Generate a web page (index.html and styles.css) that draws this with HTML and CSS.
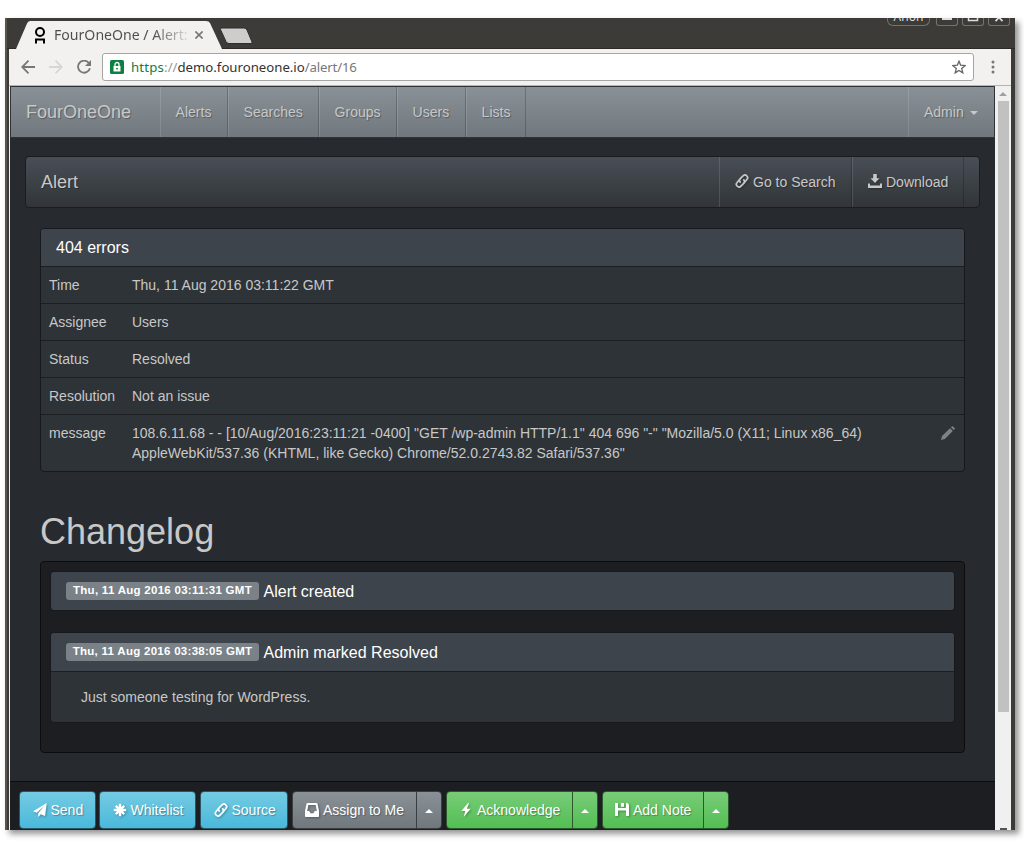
FILE: index.html
```html
<!DOCTYPE html>
<html lang="en">
<head>
<meta charset="utf-8">
<title>FourOneOne / Alert</title>
<link rel="stylesheet" href="styles.css">
</head>
<body>
<svg class="defs" aria-hidden="true">
  <symbol id="link" viewBox="0 0 14 14"><g fill="none" stroke="currentColor" stroke-width="1.7" stroke-linecap="round"><path d="M5.200 8.100A2.600 2.600 0 0 1 5.300 4.600L8 1.900a2.600 2.600 0 0 1 3.900 3.600L9.600 8.300"/><path d="M8.800 5.900a2.600 2.600 0 0 1-.1 3.500L6 12.100a2.600 2.600 0 0 1-3.900-3.600L4.400 5.700"/></g></symbol>
  <symbol id="download" viewBox="0 0 14 14"><path fill="currentColor" d="M5.200 0h3.600v4.300h2.700L7 9 2.500 4.300h2.700zM0 9.500h2v2h10v-2h2V14H0z"/></symbol>
  <symbol id="send" viewBox="0 0 14 14"><path fill="currentColor" d="M13.800.1 12 12.900l-4.200-1.700L5.200 14v-3.800L11.500 2.800 3.800 9.700.1 8.200z"/></symbol>
  <symbol id="asterisk" viewBox="0 0 14 14"><g stroke="currentColor" stroke-width="2.500"><path d="M7 .8v12.400M.8 7h12.400M2.800 2.800l8.400 8.400M11.200 2.800l-8.400 8.400"/></g></symbol>
  <symbol id="inbox" viewBox="0 0 14 14"><path fill="currentColor" fill-rule="evenodd" d="M2.500 0h9q.8 0 1 .8L14 8v5.200q0 .8-.8.8H.8Q0 14 0 13.200V8L1.500.8q.2-.8 1-.8zM3.300 2 2.200 8h2l1.300 2.200h3L9.800 8h2L10.700 2z"/></symbol>
  <symbol id="bolt" viewBox="0 0 14 14"><path fill="currentColor" d="M9 0 2.400 7.900h3.800L4.700 14l7-8.300H7.900L10 0z"/></symbol>
  <symbol id="floppy" viewBox="0 0 14 14"><path fill="currentColor" fill-rule="evenodd" d="M0 0h3v5h8V0h1.300L14 1.700V13H0zM6 0h3v3.700H6zM3 7.500V13h8V7.500z"/></symbol>
  <symbol id="pencil" viewBox="0 0 14 14"><path fill="currentColor" d="M0 14l1-3.900L9 2.200l2.800 2.800-7.900 8zM9.900 1.300l.9-.9q.5-.5 1.100 0l1.700 1.700q.5.600 0 1.100l-.9.9z"/></symbol>
</svg>

<div class="window">
  <div class="titlebar">
    <div class="tab">
      <svg class="tab-shape" viewBox="0 0 206 28"><path d="M0 28 11 2.500Q12 0 14 0H190Q193 0 194 2L206 28z" fill="#f2f1f0"/></svg>
      <div class="tab-content">
        <svg class="favicon" viewBox="0 0 12 17" fill="none" stroke="#000" stroke-width="2"><circle cx="6" cy="5" r="4"/><path d="M2 16.500v-4h8v4M1 15.500h2M9 15.500h2"/></svg>
        <span class="tab-title">FourOneOne / Alert:</span>
        <svg class="tab-close" viewBox="0 0 8 8" stroke="#777" stroke-width="1.600"><path d="M.4.4l7.200 7.200M7.600.4.400 7.600"/></svg>
      </div>
    </div>
    <svg class="new-tab" viewBox="0 0 34 18"><path d="M3 1h22q2 0 3 2l5 12q.5 1.500-1 1.500H10q-2 0-3-2L1.500 2.500Q1 1 3 1z" fill="#cecdcc" stroke="#2f2e2a"/></svg>
    <div class="controls">
      <div class="control profile"><span>Anon</span></div>
      <div class="control"><svg viewBox="0 0 20 7"><path d="M5 0h10v2H5z" fill="#ddd"/></svg></div>
      <div class="control"><svg viewBox="0 0 20 7"><path d="M5.500 0v2.500h9V0" fill="none" stroke="#ddd" stroke-width="1.500"/></svg></div>
      <div class="control"><svg viewBox="0 0 20 7"><path d="M6.500 3.200 10-.5l3.500 3.700" fill="none" stroke="#ddd" stroke-width="1.800"/></svg></div>
    </div>
  </div>

  <div class="toolbar">
    <svg class="tool back" viewBox="0 0 14 14" fill="none" stroke="#777" stroke-width="1.800"><path d="M14 7H1.500M7.500.7 1.200 7l6.300 6.300"/></svg>
    <svg class="tool forward" viewBox="0 0 14 14" fill="none" stroke="#d7d6d5" stroke-width="1.800"><path d="M0 7h12.500M6.500.7 12.800 7l-6.300 6.300"/></svg>
    <svg class="tool reload" viewBox="0 0 14 14"><path d="M11.800 3A6 6 0 1 0 12.900 8.200" fill="none" stroke="#777" stroke-width="1.800"/><path d="M14 0v6H8z" fill="#777"/></svg>
    <div class="omnibox">
      <svg class="lock" viewBox="0 0 14 14"><rect width="14" height="14" rx="1.500" fill="#0b8043"/><path d="M3.500 6h7v5.500h-7z" fill="#fff"/><path d="M5 6V4.500a2 2 0 0 1 4 0V6" fill="none" stroke="#fff" stroke-width="1.300"/><circle cx="7" cy="8.700" r=".9" fill="#0b8043"/></svg>
      <span class="url"><span class="scheme">https</span><span class="faint">://</span>demo.fouroneone.io<span class="path">/alert/16</span></span>
      <svg class="star" viewBox="0 0 14 14" fill="none" stroke="#666" stroke-width="1.300"><path d="M7 1.200l1.600 3.900 4.600.4-3.500 3 1.100 4.400L7 10.500l-3.800 2.400 1.100-4.400-3.500-3 4.600-.4z"/></svg>
    </div>
    <svg class="menu" viewBox="0 0 4 14" fill="#777"><circle cx="2" cy="2" r="1.500"/><circle cx="2" cy="7" r="1.500"/><circle cx="2" cy="12" r="1.500"/></svg>
  </div>

  <div class="viewport">
    <div class="page">
      <nav class="navbar">
        <a class="brand">FourOneOne</a>
        <a class="nav-item alerts">Alerts</a>
        <a class="nav-item searches">Searches</a>
        <a class="nav-item groups">Groups</a>
        <a class="nav-item users">Users</a>
        <a class="nav-item lists">Lists</a>
        <a class="nav-item admin">Admin<i class="caret"></i></a>
      </nav>

      <main class="content">
        <div class="subbar">
          <span class="subbar-title">Alert</span>
          <a class="nav-item search"><svg class="icon"><use href="#link"/></svg>Go to Search</a>
          <a class="nav-item download"><svg class="icon"><use href="#download"/></svg>Download</a>
        </div>

        <section class="panel details">
          <h3 class="panel-heading">404 errors</h3>
          <div class="row"><span class="key">Time</span><span class="value">Thu, 11 Aug 2016 03:11:22 GMT</span></div>
          <div class="row"><span class="key">Assignee</span><span class="value">Users</span></div>
          <div class="row"><span class="key">Status</span><span class="value">Resolved</span></div>
          <div class="row"><span class="key">Resolution</span><span class="value">Not an issue</span></div>
          <div class="row"><span class="key">message</span><span class="value">108.6.11.68 - - [10/Aug/2016:23:11:21 -0400] "GET /wp-admin HTTP/1.1" 404 696 "-" "Mozilla/5.0 (X11; Linux x86_64)<br>AppleWebKit/537.36 (KHTML, like Gecko) Chrome/52.0.2743.82 Safari/537.36"</span><svg class="icon edit"><use href="#pencil"/></svg></div>
        </section>

        <h1 class="changelog-title">Changelog</h1>
        <section class="well">
          <article class="panel">
            <h3 class="panel-heading"><span class="label">Thu, 11 Aug 2016 03:11:31 GMT</span>Alert created</h3>
          </article>
          <article class="panel">
            <h3 class="panel-heading"><span class="label">Thu, 11 Aug 2016 03:38:05 GMT</span>Admin marked Resolved</h3>
            <p class="note">Just someone testing for WordPress.</p>
          </article>
        </section>
      </main>

      <footer class="actions">
        <a class="btn info send"><svg class="icon"><use href="#send"/></svg>Send</a>
        <a class="btn info whitelist"><svg class="icon"><use href="#asterisk"/></svg>Whitelist</a>
        <a class="btn info source"><svg class="icon"><use href="#link"/></svg>Source</a>
        <div class="group"><a class="btn gray assign"><svg class="icon"><use href="#inbox"/></svg>Assign to Me</a><a class="btn gray toggle"><i class="caret up"></i></a></div>
        <div class="group"><a class="btn success ack"><svg class="icon"><use href="#bolt"/></svg>Acknowledge</a><a class="btn success toggle"><i class="caret up"></i></a></div>
        <div class="group"><a class="btn success add"><svg class="icon"><use href="#floppy"/></svg>Add Note</a><a class="btn success toggle"><i class="caret up"></i></a></div>
      </footer>
    </div>
    <div class="scrollbar">
      <i class="scroll-up"></i>
      <div class="thumb"></div>
      <i class="scroll-down"></i>
    </div>
  </div>
</div>
</body>
</html>
```

FILE: styles.css
```css
* { box-sizing: border-box; }
body {
  margin: 0;
  padding: 18px 9px 22px 5px;
  height: 852px;
  overflow: hidden;
  background: #fff;
  color: #c8c8c8;
  font: 14px/20px "Liberation Sans", Arial, sans-serif;
}
svg { display: block; flex: none; }
.defs { position: absolute; width: 0; height: 0; }
.window {
  display: flex;
  flex-direction: column;
  width: 1010px;
  height: 812px;
  background: #3c3b37;
  box-shadow: 4px 4px 6px rgba(0, 0, 0, .42);
  border-left: 2px solid #57554d;
}

/* Title bar */
.titlebar { display: flex; height: 31px; padding-left: 9px; border-bottom: 1px solid #2b2a27; }
.tab { display: grid; width: 206px; height: 28px; margin-top: 3px; }
.tab-shape, .tab-content { grid-area: 1 / 1; width: 206px; height: 28px; }
.tab-content { display: flex; align-items: center; padding-left: 18px; z-index: 1; }
.favicon { width: 12px; height: 17px; margin-right: 8px; }
.tab-title {
  width: 134px;
  white-space: nowrap;
  font: 14.1px/20px "Noto Sans", sans-serif;
  background: linear-gradient(90deg, #4c4c4c 74%, rgba(76, 76, 76, .12));
  -webkit-background-clip: text;
  background-clip: text;
  color: transparent;
}
.tab-close { width: 8px; height: 8px; margin-left: 7px; }
.new-tab { width: 34px; height: 18px; margin: 9px 0 0 -3px; }
.controls { display: flex; gap: 4px; margin: 0 5px 0 auto; }
.control { width: 22px; height: 8px; border: 1px solid #74736c; border-top: 0; border-radius: 0 0 3px 3px; overflow: hidden; }
.control svg { width: 20px; height: 7px; }
.profile { width: 43px; margin-right: 2px; border-radius: 0 0 6px 6px; color: #ddd; font: 12px/14px "Noto Sans", sans-serif; text-align: center; }
.profile span { display: block; margin-top: -8px; }

/* Address bar */
.toolbar {
  display: flex;
  align-items: center;
  height: 37px;
  margin: 0 4px 0 2px;
  padding-left: 12px;
  background: #f2f1f0;
  border-bottom: 1px solid #b5b4b2;
}
.tool { width: 14px; height: 14px; margin-right: 14px; }
.reload { margin-right: 11px; }
.omnibox {
  display: flex;
  align-items: center;
  width: 872px;
  height: 28px;
  padding: 0 7px;
  background: #fff;
  border: 1px solid #a5a5a5;
  border-radius: 3px;
}
.lock { width: 14px; height: 14px; margin-right: 7px; }
.url { font: 13.2px/20px "Noto Sans", sans-serif; color: #333; }
.scheme { color: #0b8043; letter-spacing: .2px; }
.faint { color: #999; }
.path { color: #777; letter-spacing: -.15px; }
.star { width: 14px; height: 14px; margin-left: auto; }
.menu { width: 4px; height: 14px; margin-left: 17px; }

/* Page and scroll bar */
.viewport { display: flex; flex: 1; min-height: 0; margin: 0 4px 0 2px; background: #f1f0f0; padding-left: 1px; }
.page { display: flex; flex-direction: column; width: 985px; background: #272b30; }
.scrollbar { display: flex; flex-direction: column; align-items: center; width: 16px; overflow: hidden; }
.scroll-up { border: 4px solid transparent; border-top: 0; border-bottom-color: #a0a0a0; margin-top: 6px; }
.thumb { width: 11px; height: 611px; margin-top: 5px; background: #c1c1c1; }
.scroll-down { width: 7px; height: 2px; margin-top: auto; background: #555; }

.navbar, .subbar { display: flex; height: 52px; text-shadow: 1px 1px 1px rgba(0, 0, 0, .3); }
.navbar {
  border: 1px solid #2e3338;
  background: linear-gradient(#8a9196, #7a8288 60%, #70787d);
}
.brand { width: 149px; padding-left: 15px; font-size: 18px; line-height: 50px; }
.nav-item {
  display: flex;
  align-items: center;
  padding-left: 14.6px;
  white-space: nowrap;
  border-left: 1px solid rgba(255, 255, 255, .12);
  border-right: 1px solid rgba(0, 0, 0, .2);
}
.alerts { width: 68px; }
.searches { width: 91px; }
.groups { width: 78px; }
.users { width: 69px; }
.lists { width: 60px; }
.admin { width: 86px; margin-left: auto; padding-left: 15px; border-right: 0; }
.caret { border: 4px solid transparent; border-bottom: 0; border-top-color: #c8c8c8; margin-left: 6px; margin-top: 2px; }
.caret.up { border: 4px solid transparent; border-top: 0; border-bottom-color: #fff; margin: 0; }
.icon { width: 14px; height: 14px; margin-right: 4px; filter: drop-shadow(1px 1px 1px rgba(0, 0, 0, .3)); }

.content { padding: 18px 15px 0; }
.subbar { border: 1px solid #1a1c1f; border-radius: 4px; background: linear-gradient(#484e55, #3a3f44 60%, #313539); }
.subbar .nav-item { padding-left: 15px; }
.subbar .icon { margin-top: -2px; }
.subbar-title { flex: 1; padding-left: 15px; font-size: 18px; line-height: 50px; }
.search { width: 133px; }
.download { width: 112px; margin-right: 15px; }

/* Panels */
.panel { border: 1px solid #17191c; border-radius: 4px; background: #2e3337; overflow: hidden; }
.panel-heading {
  display: flex;
  align-items: center;
  height: 37px;
  margin: 0;
  padding-left: 15px;
  background: #3e444c;
  color: #fff;
  font-size: 16px;
  font-weight: normal;
}
.details { margin: 20px 15px 0; }
.row { display: flex; padding: 8px; border-top: 1px solid #1c1e22; }
.key { width: 83px; }
.edit { margin: 3px 1px 0 auto; color: #7f8284; filter: none; }
.changelog-title { margin: 40px 15px 9px; font-size: 36px; line-height: 40px; font-weight: normal; }
.well { height: 192px; margin: 0 15px; padding: 9px; border: 1px solid #0c0d0e; border-radius: 4px; background: #1c1e22; }
.well .panel + .panel { margin-top: 21px; }
.well .panel-heading { height: 38px; padding-top: 1px; }
.label { width: 193px; height: 18px; margin-right: 4.5px; margin-top: -2px; border-radius: 3px; background: #7a8288; font-size: 11.5px; line-height: 17px; font-weight: bold; letter-spacing: .28px; text-align: center; white-space: nowrap; }
.note { margin: 0; padding: 15px 30px; border-top: 1px solid #1c1e22; }

/* Fixed action bar */
.actions { display: flex; height: 49px; margin-top: auto; padding: 9px 9px 0; border-top: 1px solid #0c0d0e; background: #1c1e22; }
.btn {
  display: flex;
  align-items: center;
  height: 38px;
  padding-left: 13px;
  border: 1px solid;
  border-radius: 4px;
  white-space: nowrap;
  text-shadow: 1px 1px 1px rgba(0, 0, 0, .3);
  color: #fff;
}
.btn .icon { margin-top: -1px; }
.info { background-image: linear-gradient(#74cae3, #5bc0de 60%, #4ab9db); border-color: #2a5664; }
.gray { background-image: linear-gradient(#8a9196, #7a8288 60%, #70787d); border-color: #3a3e41; }
.success { background-image: linear-gradient(#78cc78, #62c462 60%, #53be53); border-color: #2d572d; }
.send { width: 77px; margin-right: 3px; padding-left: 12.500px; }
.whitelist { width: 97px; margin-right: 4px; padding-left: 12.500px; }
.source { width: 88px; margin-right: 4px; padding-left: 12.500px; }
.group { display: flex; margin-right: 4px; }
.group .btn:first-child { border-radius: 4px 0 0 4px; }
.assign { width: 125px; padding-left: 12px; }
.ack { width: 127px; padding-left: 12px; }
.add { width: 102px; padding-left: 12px; }
.group .toggle { width: 26px; margin-left: -1px; padding: 2px 0 0; justify-content: center; border-radius: 0 4px 4px 0; }
```
